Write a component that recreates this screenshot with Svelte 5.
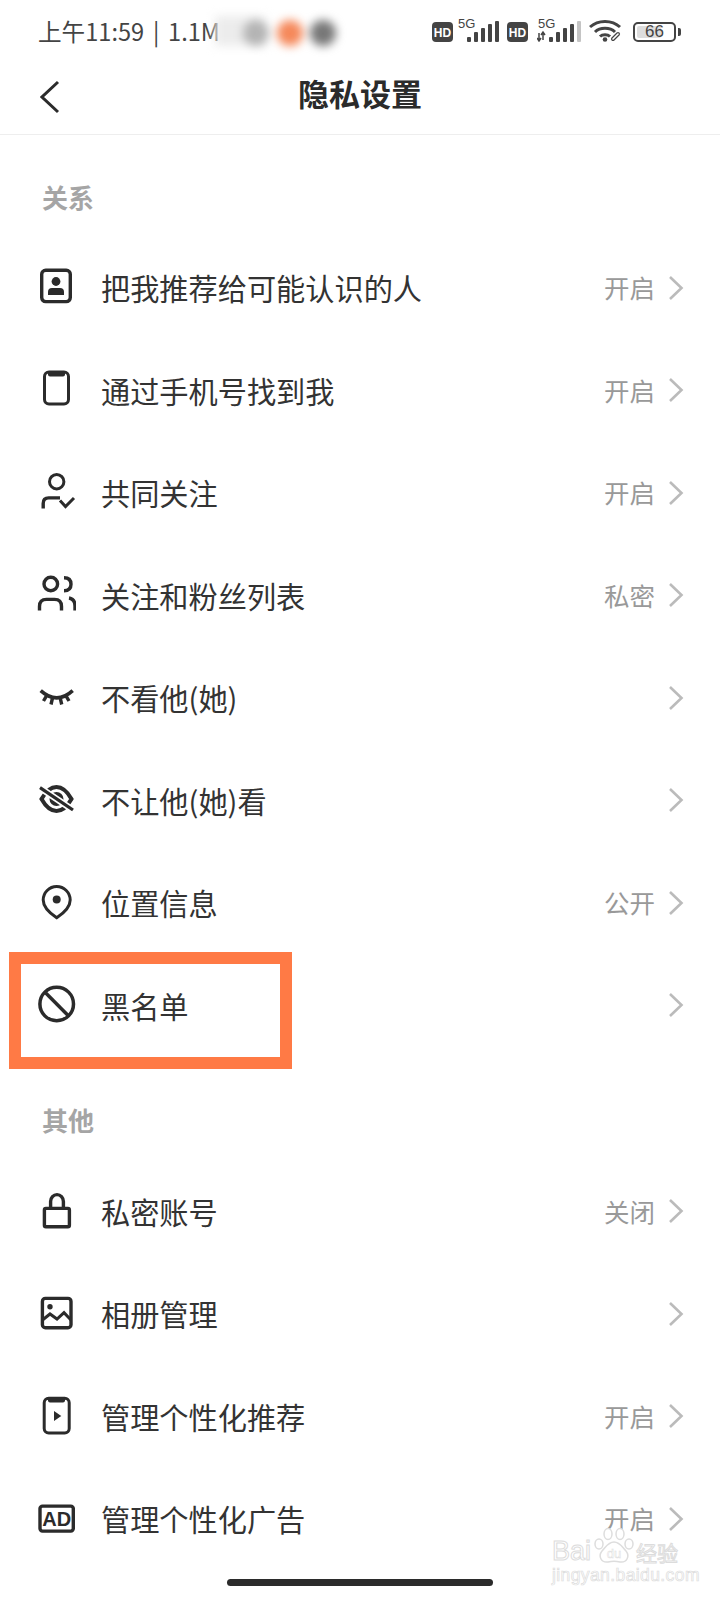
<script>
  const sections = [
    {
      title: '关系',
      rows: [
        { icon: 'contact', label: '把我推荐给可能认识的人', value: '开启' },
        { icon: 'phone', label: '通过手机号找到我', value: '开启' },
        { icon: 'follow', label: '共同关注', value: '开启' },
        { icon: 'people', label: '关注和粉丝列表', value: '私密' },
        { icon: 'closed', label: '不看他(她)' },
        { icon: 'hidden', label: '不让他(她)看' },
        { icon: 'pin', label: '位置信息', value: '公开' },
        { icon: 'block', label: '黑名单', marked: true }
      ]
    },
    {
      title: '其他',
      rows: [
        { icon: 'lock', label: '私密账号', value: '关闭' },
        { icon: 'image', label: '相册管理' },
        { icon: 'play', label: '管理个性化推荐', value: '开启' },
        { icon: 'ad', label: '管理个性化广告', value: '开启' }
      ]
    }
  ]
</script>

{#snippet hd()}
  <svg class="hd" width="21" height="20" viewBox="0 0 21 20">
    <rect width="21" height="20" rx="4" fill="#444" />
    <text x="10.5" y="14.5" text-anchor="middle" class="hd-text">HD</text>
  </svg>
{/snippet}

{#snippet bars(last)}
  <rect x="0" y="16" width="4" height="5" rx="1" />
  <rect x="7" y="11" width="4" height="10" rx="1" />
  <rect x="14" y="7" width="4" height="14" rx="1" />
  <rect x="21" y="3" width="4" height="18" rx="1" />
  <rect x="28" y="0" width="4" height="21" rx="1" fill={last} />
{/snippet}

{#snippet icon(name)}
  <svg class="icon" width="40" height="40" viewBox="0 0 40 40" fill="none" stroke="#2b2b2b" stroke-width="3.4">
    {#if name === 'contact'}
      <rect x="5.7" y="2.2" width="28.6" height="31.4" rx="4" />
      <circle cx="20" cy="13.5" r="4.4" fill="#2b2b2b" stroke="none" />
      <path d="M12 27v-3q0-4 4-4h8q4 0 4 4v3z" fill="#2b2b2b" stroke="none" />
    {:else if name === 'phone'}
      <rect x="8.5" y="2" width="24" height="32" rx="4.5" stroke-width="3" />
      <path d="M12 2h17v2.500q0 2-2 2h-13q-2 0-2-2z" fill="#2b2b2b" stroke="none" />
    {:else if name === 'follow'}
      <circle cx="20.700" cy="8.700" r="7.200" stroke-width="3" />
      <path d="M7.200 35.400v-5q0-5.500 5.500-5.500h11.300" stroke-width="3.400" />
      <path d="M24 27.500l5.500 6 8.500-8.500" stroke-width="3" />
    {:else if name === 'people'}
      <circle cx="14.800" cy="9" r="6.800" stroke-width="3.400" />
      <path d="M3.500 35.400v-4q0-7 7-7h8q7 0 7 7v4" stroke-width="3.400" />
      <path d="M28 2.800q7 0 7 6.500t-7 6.500M33 23q6 1 6 8v4.400" stroke-width="3.400" />
    {:else if name === 'closed'}
      <path d="M4.700 12.700q16 14.500 32 0" stroke-width="3.600" />
      <path d="M7.500 23l3-5.200M15 26.500l1.500-6.500M25.700 26.500l-1.500-6.500M33 23l-3-5.200" stroke-width="3.400" />
    {:else if name === 'hidden'}
      <path d="M5.500 19c4.500-8 9.500-12 15-12s10.500 4 15 12c-4.500 8-9.500 12-15 12s-10.500-4-15-12z" stroke-width="4" />
      <circle cx="20.500" cy="19" r="7" fill="#2b2b2b" stroke="none" />
      <path d="M4 7.700l33 22.300" stroke="#fff" stroke-width="6.500" />
      <path d="M4 7.700l33 22.300" stroke-width="3.200" />
    {:else if name === 'pin'}
      <path d="M20.700 34.800c-8.700-5.800-13.500-11.800-13.500-17.800a13.500 13.500 0 0 1 27 0c0 6-4.800 12-13.500 17.800z" stroke-width="3" />
      <circle cx="20.700" cy="16.400" r="4" fill="#2b2b2b" stroke="none" />
    {:else if name === 'block'}
      <circle cx="20.700" cy="19" r="16.800" stroke-width="3.500" />
      <path d="M8.800 7.100l23.800 23.800" stroke-width="3.500" />
    {:else if name === 'lock'}
      <rect x="8.400" y="17.400" width="25" height="18.300" rx="1.500" />
      <path d="M14.600 17v-6.500a6.400 6.900 0 0 1 12.800 0v6.500" />
    {:else if name === 'image'}
      <rect x="6.400" y="4.400" width="28.600" height="29.300" rx="3" />
      <circle cx="14" cy="12.700" r="2.700" fill="#2b2b2b" stroke="none" />
      <path d="M6.500 26l7.500-6 7 5 7-6.300 7 7.300" stroke-width="3" />
    {:else if name === 'play'}
      <rect x="8.200" y="2.200" width="25" height="34.700" rx="4.500" stroke-width="3" />
      <path d="M12 2h17v2.500q0 2-2 2h-13q-2 0-2-2z" fill="#2b2b2b" stroke="none" />
      <path d="M18 15l7.300 5-7.300 5z" fill="#2b2b2b" stroke="none" />
    {:else if name === 'ad'}
      <rect x="4" y="7.100" width="33.300" height="25" rx="2.500" />
      <text x="20.700" y="27" text-anchor="middle" class="ad-text">AD</text>
    {/if}
  </svg>
{/snippet}

<div class="page">
  <div class="status">
    <span class="clock">上午11:59 | 1.1M</span>
    <div class="indicators">
      {@render hd()}
      <div class="sim">
        <span class="five-g">5G</span>
        <svg class="signal" width="32" height="21" viewBox="0 0 32 21" fill="#444">
          {@render bars('#444')}
        </svg>
      </div>
      {@render hd()}
      <div class="sim second">
        <span class="five-g">5G</span>
        <svg class="signal" width="44" height="21" viewBox="-12 0 44 21" fill="#444">
          <path d="M-10 12v8M-6 11v8M-12 17l2 3 2-3M-8 14l2-3 2 3" stroke="#444" stroke-width="1.500" fill="none" />
          {@render bars('#c4c4c4')}
        </svg>
      </div>
      <svg class="wifi" width="34" height="23" viewBox="0 0 34 23" fill="none" stroke="#444" stroke-width="3">
        <path d="M1 8c8-7.500 22-7.500 30 0M6 13c5-5 15-5 20 0M11 17.500c2.500-2.500 7.500-2.500 10 0" />
        <circle cx="16" cy="20.500" r="2.300" fill="#444" stroke="none" />
        <path d="M24 20l5-5" stroke-width="4" stroke-linecap="round" />
        <path d="M24 20l5-5" stroke="#fff" stroke-width="1.600" stroke-linecap="round" />
      </svg>
      <div class="battery">
        <span class="charge"></span>
        <span class="level">66</span>
        <span class="nub"></span>
      </div>
    </div>
    <div class="smudge" aria-hidden="true">
      <span class="veil"></span>
      <span class="blob a"></span>
      <span class="blob b"></span>
      <span class="blob c"></span>
    </div>
  </div>

  <header>
    <svg class="back" width="20" height="34" viewBox="0 0 20 34" fill="none" stroke="#2b2b2b" stroke-width="3">
      <path d="M18 2L2 17l16 15" />
    </svg>
    <h1>隐私设置</h1>
  </header>

  {#each sections as section}
    <section>
      <h2>{section.title}</h2>
      {#each section.rows as row}
        <div class="row">
          {#if row.marked}<span class="mark"></span>{/if}
          {@render icon(row.icon)}
          <span class="label">{row.label}</span>
          {#if row.value}<span class="value">{row.value}</span>{/if}
          <svg class="chevron" width="16" height="26" viewBox="0 0 16 26" fill="none" stroke="#bbb" stroke-width="2.600">
            <path d="M2 2l11.500 11L2 24" />
          </svg>
        </div>
      {/each}
    </section>
  {/each}

  <div class="home-bar"></div>

  <div class="watermark" aria-hidden="true">
    <div class="brand">
      <span class="bai">Bai</span>
      <svg width="40" height="38" viewBox="0 0 40 38" fill="#fff" stroke="#ddd" stroke-width="1.500">
        <ellipse cx="5" cy="17" rx="4" ry="5" />
        <ellipse cx="14" cy="7" rx="4" ry="5.500" />
        <ellipse cx="26" cy="7" rx="4" ry="5.500" />
        <ellipse cx="35" cy="17" rx="4" ry="5" />
        <path d="M20 15c-6 0-8 5-12 9-4 5-1 12 6 11 4-1 8-1 12 0 7 1 10-6 6-11-4-4-6-9-12-9z" />
        <text x="20" y="31" text-anchor="middle" class="du">du</text>
      </svg>
      <span class="jy">经验</span>
    </div>
    <div class="site">jingyan.baidu.com</div>
  </div>
</div>

<style>
  :global(body) {
    background: #fff;
  }

  .page {
    position: relative;
    width: 720px;
    height: 1600px;
    overflow: hidden;
    background: #fff;
    color: #2b2b2b;
    font-family: "Noto Sans CJK SC", "Noto Sans", sans-serif;
  }

  .status {
    position: relative;
    display: flex;
    align-items: center;
    justify-content: space-between;
    height: 66px;
    padding: 0 41px 4px 38px;
    box-sizing: border-box;
  }

  .clock {
    font-size: 23.600px;
    word-spacing: 3.500px;
    color: #444;
    white-space: nowrap;
  }

  .indicators {
    display: flex;
    align-items: flex-end;
    height: 22px;
  }

  .hd {
    display: block;
  }

  .hd-text {
    font: 800 12px "Liberation Sans", sans-serif;
    fill: #fff;
  }

  .sim {
    position: relative;
    width: 54px;
    height: 22px;
  }

  .sim.second {
    width: 61px;
  }

  .five-g {
    position: absolute;
    left: 5px;
    top: -3px;
    font: 13px/14px "Liberation Sans", sans-serif;
    color: #444;
  }

  .second .five-g {
    left: 10px;
  }

  .signal {
    position: absolute;
    right: 8px;
    bottom: 0;
  }

  .wifi {
    margin-right: 10px;
  }

  .battery {
    position: relative;
    width: 43px;
    height: 20px;
    margin-right: 3px;
    border: 2px solid #444;
    border-radius: 5px;
    box-sizing: border-box;
  }

  .charge {
    position: absolute;
    left: 2px;
    top: 2px;
    bottom: 2px;
    width: 24px;
    background: #ddd;
    border-radius: 2px;
  }

  .level {
    position: absolute;
    inset: 0;
    text-align: center;
    font: 17px/16px "Liberation Sans", sans-serif;
    color: #444;
  }

  .nub {
    position: absolute;
    right: -7px;
    top: 4px;
    width: 3px;
    height: 8px;
    background: #444;
    border-radius: 0 2px 2px 0;
  }

  .smudge {
    position: absolute;
    left: 205px;
    top: 10px;
    width: 150px;
    height: 46px;
    filter: blur(5px);
  }

  .veil {
    position: absolute;
    left: 10px;
    top: 6px;
    width: 50px;
    height: 30px;
    background: #ececec;
  }

  .blob {
    position: absolute;
    top: 10px;
    width: 26px;
    height: 26px;
    border-radius: 50%;
  }

  .blob.a {
    left: 38px;
    background: #b4b4b4;
  }

  .blob.b {
    left: 72px;
    background: #f5885a;
  }

  .blob.c {
    left: 105px;
    background: #777;
  }

  header {
    position: relative;
    display: flex;
    align-items: center;
    justify-content: center;
    height: 68px;
    border-bottom: 1px solid #eee;
  }

  .back {
    position: absolute;
    left: 40px;
    top: 14px;
  }

  h1 {
    margin: 0 0 16px;
    font-size: 31px;
    font-weight: 700;
    color: #2b2b2b;
  }

  section:first-of-type {
    margin-top: -1px;
  }

  section + section {
    margin-top: 1px;
  }

  h2 {
    display: flex;
    align-items: center;
    height: 102.400px;
    box-sizing: border-box;
    margin: 0;
    padding: 22px 0 0 42px;
    font-size: 26px;
    font-weight: 700;
    color: #a5a5a5;
  }

  .row {
    position: relative;
    display: flex;
    align-items: center;
    height: 102.500px;
    padding: 0 36px;
  }

  .icon {
    flex: none;
    margin-right: 25px;
  }

  .label {
    flex: 1;
    padding-bottom: 1px;
    font-size: 29.200px;
    color: #333;
    white-space: nowrap;
  }

  .value {
    margin-right: 13px;
    padding-bottom: 2px;
    font-size: 25.500px;
    color: #999;
  }

  .chevron {
    flex: none;
  }

  .mark {
    position: absolute;
    left: 9px;
    top: -2px;
    width: 283px;
    height: 117px;
    box-sizing: border-box;
    border: 12.500px solid #ff7a45;
  }

  .home-bar {
    position: absolute;
    left: 227px;
    top: 1579px;
    width: 266px;
    height: 7px;
    border-radius: 4px;
    background: #2b2b2b;
  }

  .watermark {
    position: absolute;
    left: 552px;
    top: 1523px;
    width: 130px;
    color: #fff;
    -webkit-text-stroke: 1px #dcdcdc;
  }

  .brand {
    display: flex;
    align-items: flex-end;
    height: 42px;
  }

  .bai {
    width: 42px;
    font: 27px/27px "Liberation Sans", sans-serif;
  }

  .brand svg {
    flex: none;
  }

  .du {
    font: 13px "Liberation Sans", sans-serif;
    stroke-width: 0.500;
    fill: #fff;
  }

  .jy {
    font-size: 21px;
    line-height: 26px;
    margin-left: 2px;
  }

  .site {
    font: 17.500px/20px "Liberation Sans", sans-serif;
    letter-spacing: 0.400px;
    white-space: nowrap;
    -webkit-text-stroke-width: 0.700px;
  }

  .ad-text {
    font: 800 20px "Liberation Sans", sans-serif;
    fill: #2b2b2b;
    stroke: none;
  }
</style>
